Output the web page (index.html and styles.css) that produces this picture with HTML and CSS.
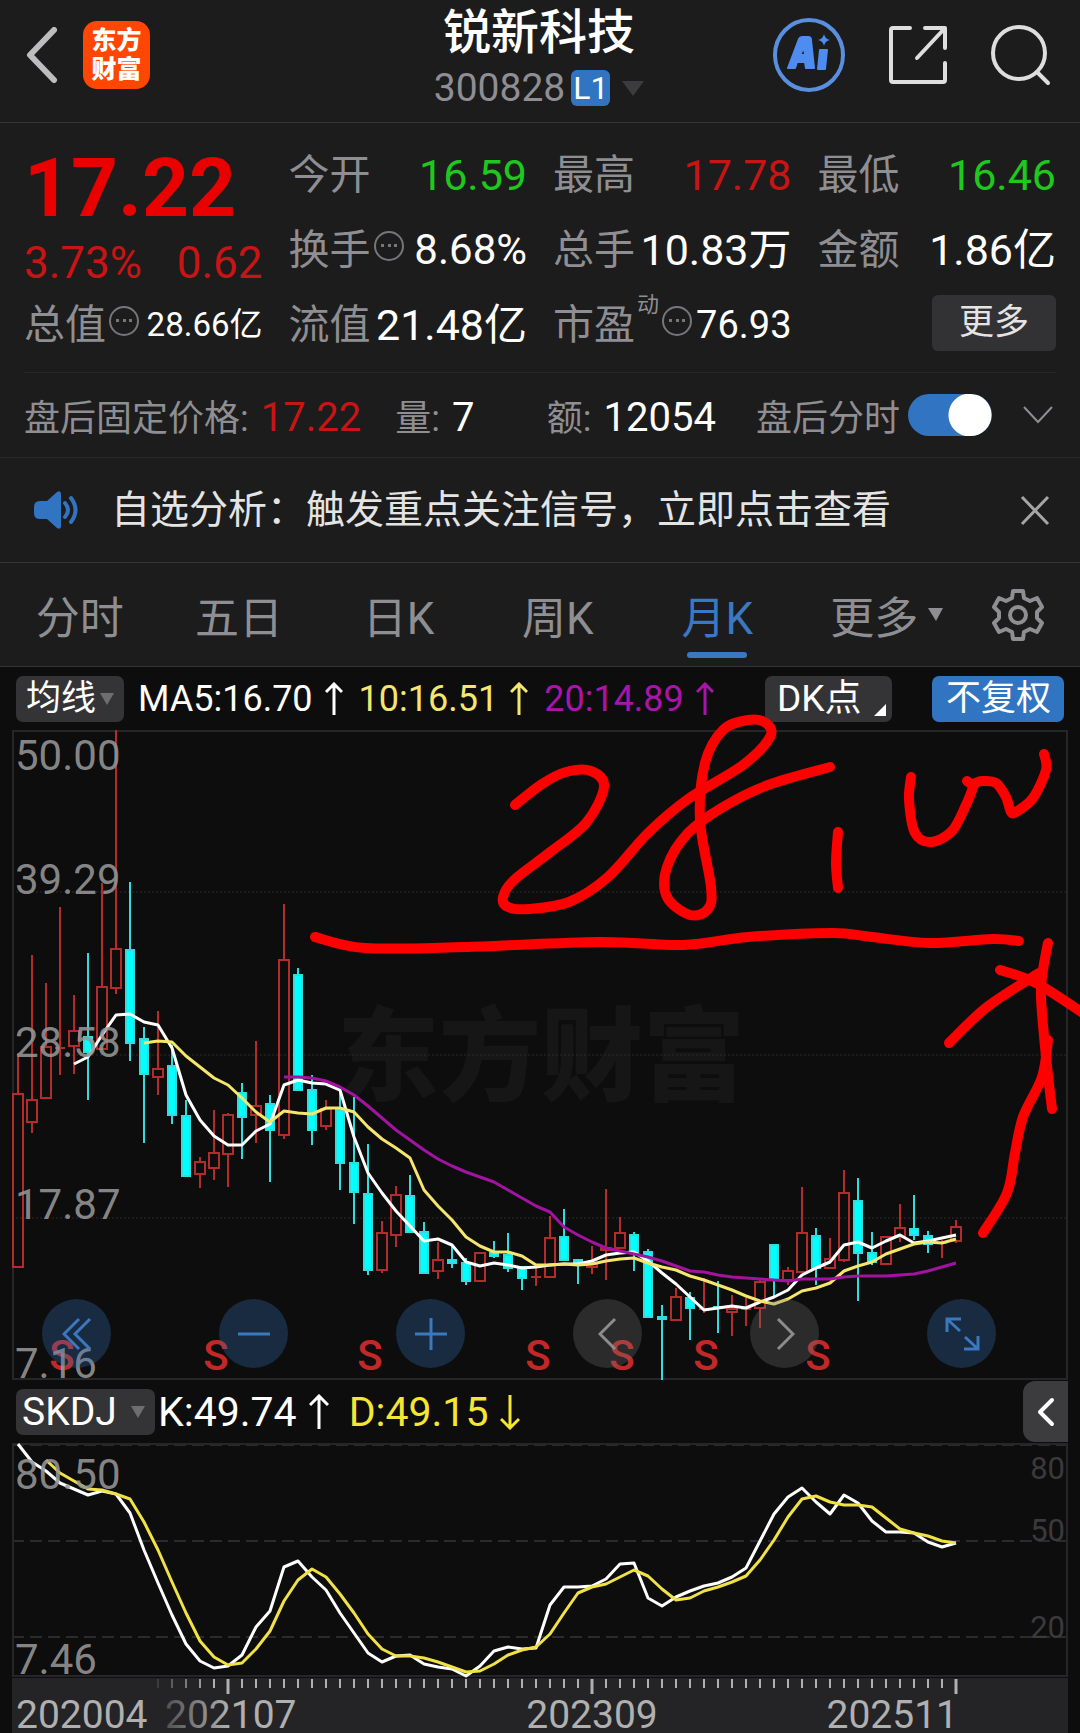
FILE: index.html
```
<!DOCTYPE html>
<html lang="zh-CN">
<head>
    <meta charset="UTF-8">
    <meta name="viewport" content="width=device-width, initial-scale=1.0">
    <title>锐新科技 300828</title>
    <link rel="stylesheet" href="styles.css">
</head>
<body>

    <!-- Header -->
    <header class="topbar">
        <div class="topbar-side">
            <button class="icon-btn back" aria-label="返回">
                <svg width="32" height="56" viewBox="0 0 32 56"><path d="M28 3 4 28l24 25" fill="none" stroke="#bdbdbf" stroke-width="6" stroke-linecap="round" stroke-linejoin="round"/></svg>
            </button>
            <a class="logo" href="#">东方<br>财富</a>
        </div>
        <div class="stock">
            <h1>锐新科技</h1>
            <div class="stock-code">
                <span>300828</span>
                <span class="level">L1</span>
                <svg width="22" height="15" viewBox="0 0 22 15"><path d="M0 0h22L11 15z" fill="#3c3c3e"/></svg>
            </div>
        </div>
        <div class="topbar-side topbar-right">
            <button class="icon-btn" aria-label="AI">
                <svg width="74" height="76" viewBox="0 0 74 76">
                    <ellipse cx="37" cy="38" rx="34" ry="35" fill="none" stroke="#5a8fe0" stroke-width="4"/>
                    <path d="M16 51 27 22q1-2 3-2h6q3 0 3 3l3 28h-8l-1-6h-8l-2 6zM28 38h5l-1-8z" fill="#4e8cf0" stroke="#4e8cf0" stroke-width="2" stroke-linejoin="round" fill-rule="evenodd"/>
                    <path d="M48 33h7l-2 19h-7z" fill="#4e8cf0" stroke="#4e8cf0" stroke-width="2" stroke-linejoin="round"/>
                    <path d="M52 17q1 5 6 6-5 1-6 6-1-5-6-6 5-1 6-6z" fill="#4e8cf0"/>
                </svg>
            </button>
            <button class="icon-btn" aria-label="分享">
                <svg width="60" height="60" viewBox="0 0 60 60" fill="none" stroke="#dededf" stroke-width="4" stroke-linecap="round" stroke-linejoin="round">
                    <path d="M22 3H5q-2 0-2 2v50q0 2 2 2h50q2 0 2-2V38M37 3h20v20M57 3 29 33"/>
                </svg>
            </button>
            <button class="icon-btn" aria-label="搜索">
                <svg width="62" height="62" viewBox="0 0 62 62" fill="none" stroke="#dededf" stroke-width="4" stroke-linecap="round">
                    <circle cx="29" cy="29" r="26"/><path d="m47 48 11 11"/>
                </svg>
            </button>
        </div>
    </header>

    <!-- Quote -->
    <section class="quote">
        <div class="price-box">
            <div class="price">17.22</div>
            <div class="change"><span>3.73%</span><span>0.62</span></div>
        </div>
        <div class="stat"><span class="label">今开</span><span class="value down">16.59</span></div>
        <div class="stat"><span class="label">最高</span><span class="value up">17.78</span></div>
        <div class="stat"><span class="label">最低</span><span class="value down">16.46</span></div>
        <div class="stat">
            <span class="label">换手</span>
            <svg class="dots" width="32" height="32" viewBox="0 0 32 32"><circle cx="16" cy="16" r="14" fill="none" stroke="#77777b" stroke-width="2"/><path d="M8 14h3v3H8zM15 14h3v3h-3zM21 14h3v3h-3z" fill="#77777b"/></svg>
            <span class="value mid">8.68%</span>
        </div>
        <div class="stat"><span class="label">总手</span><span class="value">10.83万</span></div>
        <div class="stat"><span class="label">金额</span><span class="value">1.86亿</span></div>
        <div class="stat">
            <span class="label">总值</span>
            <svg class="dots" width="32" height="32" viewBox="0 0 32 32"><circle cx="16" cy="16" r="14" fill="none" stroke="#77777b" stroke-width="2"/><path d="M8 14h3v3H8zM15 14h3v3h-3zM21 14h3v3h-3z" fill="#77777b"/></svg>
            <span class="value small">28.66亿</span>
        </div>
        <div class="stat"><span class="label">流值</span><span class="value">21.48亿</span></div>
        <div class="stat">
            <span class="label">市盈</span><span class="label dynamic">动</span>
            <svg class="dots" width="32" height="32" viewBox="0 0 32 32"><circle cx="16" cy="16" r="14" fill="none" stroke="#77777b" stroke-width="2"/><path d="M8 14h3v3H8zM15 14h3v3h-3zM21 14h3v3h-3z" fill="#77777b"/></svg>
            <span class="value ratio">76.93</span>
        </div>
        <div class="stat"><button class="more">更多</button></div>
    </section>

    <!-- After-hours -->
    <section class="after">
        <div class="pair"><span class="label">盘后固定价格:</span><span class="value up">17.22</span></div>
        <div class="pair"><span class="label">量:</span><span class="value">7</span></div>
        <div class="pair pair-amount"><span class="label">额:</span><span class="value">12054</span></div>
        <div class="pair pair-switch">
            <label class="label" for="afterSwitch">盘后分时</label>
            <input class="switch" type="checkbox" id="afterSwitch" checked>
        </div>
        <button class="icon-btn" aria-label="展开">
            <svg width="32" height="20" viewBox="0 0 32 20"><path d="m2 2 14 15L30 2" fill="none" stroke="#8e8e93" stroke-width="2"/></svg>
        </button>
    </section>

    <!-- Notice -->
    <section class="notice">
        <svg width="44" height="38" viewBox="0 0 44 38">
            <path d="M6 10h7L23 1q4-2 4 2v32q0 4-4 2L13 28H6q-6 0-6-6v-6q0-6 6-6z" fill="#3174c1"/>
            <path d="M31 12q6 7 0 14M37 7q9 12 0 24" fill="none" stroke="#3174c1" stroke-width="4" stroke-linecap="round"/>
        </svg>
        <p>自选分析：触发重点关注信号，立即点击查看</p>
        <button class="icon-btn" aria-label="关闭">
            <svg width="30" height="32" viewBox="0 0 30 32"><path d="m2 3 26 27M28 3 2 30" fill="none" stroke="#a5a5a7" stroke-width="3"/></svg>
        </button>
    </section>

    <!-- Period tabs -->
    <nav class="tabs">
        <button>分时</button>
        <button>五日</button>
        <button>日K</button>
        <button>周K</button>
        <button class="active">月K</button>
        <button>更多<svg width="15" height="13" viewBox="0 0 15 13"><path d="M0 0h15L8 13z" fill="#8e8e93"/></svg></button>
        <button aria-label="设置">
            <svg width="54" height="54" viewBox="0 0 54 54" fill="none" stroke="#8e8e93" stroke-width="4" stroke-linejoin="round">
                <path d="M22 3h10l1 7 6 3 7-3 5 9-5 5v6l5 5-5 9-7-3-6 3-1 7H22l-1-7-6-3-7 3-5-9 5-5v-6l-5-5 5-9 7 3 6-3z"/>
                <circle cx="27" cy="27" r="8"/>
            </svg>
        </button>
    </nav>

    <main class="charts">
        <!-- Moving averages -->
        <div class="bar">
            <button class="pick">均线<svg width="14" height="12" viewBox="0 0 14 12"><path d="M0 0h14L7 12z" fill="#6e6e70"/></svg></button>
            <span class="ma">MA5:16.70<svg class="arrow" width="18" height="34" viewBox="0 0 18 34"><path d="M9 33V2M1 10l8-8 8 8"/></svg></span>
            <span class="ma ma10">10:16.51<svg class="arrow" width="18" height="34" viewBox="0 0 18 34"><path d="M9 33V2M1 10l8-8 8 8"/></svg></span>
            <span class="ma ma20">20:14.89<svg class="arrow" width="18" height="34" viewBox="0 0 18 34"><path d="M9 33V2M1 10l8-8 8 8"/></svg></span>
            <button class="pick dk">DK点<svg width="12" height="12" viewBox="0 0 12 12"><path d="M12 0v12H0z" fill="#fff"/></svg></button>
            <button class="pick rights">不复权</button>
        </div>

        <!-- Monthly candles -->
        <div class="plot">
            <svg id="kline" class="kline" viewBox="12 730 1056 650">
                <text class="watermark" x="541" y="1093" text-anchor="middle">东方财富</text>
                <path class="grid dotted" d="M12 892H1068M12 1055H1068M12 1218H1068"/>
                <rect class="frame" x="13" y="731" width="1054" height="648"/>
                <g id="candles"></g>
                <g id="averages"></g>
                <g class="sell">
                    <text x="62" y="1370">S</text>
                    <text x="216" y="1370">S</text>
                    <text x="370" y="1370">S</text>
                    <text x="538" y="1370">S</text>
                    <text x="622" y="1370">S</text>
                    <text x="706" y="1370">S</text>
                    <text x="818" y="1370">S</text>
                </g>
                <g class="scale">
                    <text x="15" y="770">50.00</text>
                    <text x="15" y="894">39.29</text>
                    <text x="15" y="1057">28.58</text>
                    <text x="15" y="1219">17.87</text>
                    <text x="15" y="1378">7.16</text>
                </g>
            </svg>
            <div class="tools">
                <button aria-label="最早"><svg width="30" height="34" viewBox="0 0 30 34"><path d="M17 2 2 17l15 15M28 2 13 17l15 15"/></svg></button>
                <button aria-label="缩小"><svg width="34" height="34" viewBox="0 0 34 34"><path d="M1 17h32"/></svg></button>
                <button aria-label="放大"><svg width="34" height="34" viewBox="0 0 34 34"><path d="M1 17h32M17 1v32"/></svg></button>
                <button class="gray" aria-label="左移"><svg width="20" height="34" viewBox="0 0 20 34"><path d="M17 2 2 17l15 15"/></svg></button>
                <button class="gray" aria-label="右移"><svg width="20" height="34" viewBox="0 0 20 34"><path d="m3 2 15 15L3 32"/></svg></button>
                <button aria-label="全屏"><svg width="36" height="36" viewBox="0 0 36 36"><path d="M3 16V3h14M3 3l13 12M34 20v13H20M34 33 21 21"/></svg></button>
            </div>
            <svg id="pen" class="pen" viewBox="12 730 1056 650" aria-hidden="true"></svg>
        </div>

        <!-- SKDJ -->
        <div class="bar skdj-bar">
            <button class="pick">SKDJ<svg width="14" height="12" viewBox="0 0 14 12"><path d="M0 0h14L7 12z" fill="#6e6e70"/></svg></button>
            <span class="ma">K:49.74<svg class="arrow" width="20" height="36" viewBox="0 0 20 36"><path d="M10 35V2M1 11l9-9 9 9"/></svg></span>
            <span class="ma d-line">D:49.15<svg class="arrow" width="20" height="36" viewBox="0 0 20 36"><path d="M10 1v33M1 25l9 9 9-9"/></svg></span>
            <button class="drawer" aria-label="展开侧栏"><svg width="18" height="30" viewBox="0 0 18 30"><path d="M15 3 3 15l12 12" fill="none" stroke="#fff" stroke-width="4" stroke-linecap="round" stroke-linejoin="round"/></svg></button>
        </div>
        <svg class="kline" viewBox="12 1443 1056 290">
            <defs>
                <linearGradient id="fade" gradientUnits="userSpaceOnUse" x1="150" y1="0" x2="230" y2="0">
                    <stop offset="0" stop-color="#3a3a3c"/>
                    <stop offset="1" stop-color="#b0b0b0"/>
                </linearGradient>
            </defs>
            <path class="grid dashed" d="M12 1445H1068M12 1541H1068M12 1637H1068"/>
            <rect class="frame" x="13" y="1444" width="1054" height="232"/>
            <g class="levels">
                <text x="1065" y="1479">80</text>
                <text x="1065" y="1541">50</text>
                <text x="1065" y="1638">20</text>
            </g>
            <g id="skdj"></g>
            <g class="scale">
                <text x="15" y="1489">80.50</text>
                <text x="15" y="1674">7.46</text>
            </g>
            <rect x="12" y="1678" width="1056" height="55" fill="#242426"/>
            <g id="ticks"></g>
            <g class="dates">
                <text x="16" y="1728">202004</text>
                <text x="165" y="1728" fill="url(#fade)">202107</text>
                <text x="592" y="1728" text-anchor="middle">202309</text>
                <text x="958" y="1728" text-anchor="end">202511</text>
            </g>
        </svg>
    </main>

    <script src="script.js"></script>
</body>
</html>
```
FILE: styles.css
```
* {
    box-sizing: border-box;
}

body {
    margin: 0;
    background-color: #1c1c1c;
    color: #fff;
    font-family: Roboto, "Noto Sans CJK SC", sans-serif;
    overflow-x: hidden;
}

button {
    padding: 0;
    border: none;
    background: none;
    color: inherit;
    font: inherit;
    cursor: pointer;
}

svg {
    display: block;
    flex: none;
}

.label {
    color: #8e8e93;
    white-space: nowrap;
}

.value {
    white-space: nowrap;
}

.up {
    color: #c81414;
}

.down {
    color: #1ec81e;
}

/* Header */
.topbar {
    display: grid;
    grid-template-columns: 1fr auto 1fr;
    align-items: center;
    height: 123px;
    padding: 0 28px 0 26px;
    border-bottom: 1px solid #353537;
}

.topbar-side {
    display: flex;
    align-items: center;
    gap: 25px;
    padding-bottom: 12px;
}

.topbar-right {
    justify-content: flex-end;
    gap: 42px;
}

.logo {
    width: 67px;
    height: 68px;
    padding-top: 5px;
    border-radius: 14px;
    background-color: #ff4602;
    color: #fff;
    font-size: 25px;
    font-weight: 900;
    line-height: 29px;
    text-align: center;
    text-decoration: none;
}

.stock {
    text-align: center;
}

h1 {
    margin: 0;
    font-size: 48px;
    font-weight: 500;
    line-height: 56px;
}

.stock-code {
    display: flex;
    align-items: center;
    justify-content: center;
    gap: 6px;
    height: 56px;
    padding-bottom: 2px;
    color: #8e8e93;
    font-size: 39px;
}

.stock-code svg {
    margin-left: 6px;
}

.level {
    width: 39px;
    border-radius: 6px;
    background-color: #3174c1;
    color: #fff;
    font-size: 32px;
    line-height: 36px;
}

/* Quote */
.quote {
    display: grid;
    grid-template-columns: repeat(4, 1fr);
    grid-auto-rows: 75px;
    column-gap: 26px;
    margin: 0 24px;
    padding: 14px 0 10px;
    border-bottom: 1px solid #272729;
}

.price-box {
    grid-row: span 2;
}

.price {
    color: #eb0000;
    font-size: 82px;
    font-weight: 700;
    line-height: 102px;
}

.change {
    display: flex;
    justify-content: space-between;
    color: #c81414;
    font-size: 44px;
    line-height: 48px;
}

.stat {
    display: flex;
    align-items: center;
    min-width: 0;
    font-size: 41px;
    line-height: 60px;
}

.stat .value {
    margin-left: auto;
    font-size: 43px;
}

.stat .value.mid {
    font-size: 42px;
}

.stat .value.ratio {
    font-size: 38px;
}

.stat .value.small {
    font-size: 33px;
}

.stat .dynamic {
    align-self: flex-start;
    margin-left: 2px;
    font-size: 22px;
    line-height: 36px;
}

.dots {
    margin-left: 2px;
    margin-bottom: 8px;
}

.more {
    width: 124px;
    height: 56px;
    margin-left: auto;
    margin-bottom: 4px;
    border-radius: 6px;
    background-color: #323234;
    color: #e4e4e4;
    font-size: 35px;
    line-height: 56px;
}

/* After-hours */
.after {
    display: flex;
    align-items: center;
    height: 85px;
    padding: 0 26px 0 24px;
    border-bottom: 1px solid #29292b;
    font-size: 36px;
}

.pair {
    display: flex;
    align-items: center;
    gap: 12px;
    margin-right: 34px;
}

.pair .value {
    padding-top: 4px;
    font-size: 40px;
}

.pair-amount {
    margin-left: auto;
}

.pair-switch {
    margin-left: 6px;
    margin-right: 30px;
    gap: 8px;
}

.switch {
    appearance: none;
    width: 84px;
    height: 42px;
    margin: 0;
    border-radius: 21px;
    background: radial-gradient(circle at 62px 21px, #fff 21px, transparent 22px) #3174c1;
}

/* Notice */
.notice {
    display: flex;
    align-items: center;
    height: 105px;
    padding: 0 30px 0 34px;
    border-bottom: 1px solid #353537;
}

.notice p {
    flex: 1;
    margin: 0 0 0 33px;
    color: #e4e4e4;
    font-size: 39px;
    line-height: 50px;
}

/* Period tabs */
.tabs {
    display: grid;
    grid-template-columns: repeat(5, 160fr) 180fr 84fr;
    height: 104px;
    padding-right: 20px;
    border-bottom: 1px solid #353537;
}

.tabs button {
    position: relative;
    display: flex;
    align-items: center;
    justify-content: center;
    gap: 10px;
    color: #8e8e93;
    font-size: 44px;
}

.tabs .active {
    color: #3b78c0;
}

.tabs .active::after {
    content: "";
    position: absolute;
    bottom: 8px;
    left: 50%;
    width: 60px;
    height: 6px;
    margin-left: -30px;
    border-radius: 3px;
    background-color: #3b78c0;
}

/* Charts */
.charts {
    padding: 0 12px;
    background-color: #0d0d0d;
}

.bar {
    display: flex;
    align-items: center;
    height: 63px;
    padding: 0 4px;
    font-size: 36px;
}

.pick {
    display: flex;
    align-items: center;
    justify-content: space-between;
    height: 46px;
    padding: 0 10px;
    border-radius: 7px;
    background-color: #343436;
    font-size: 35px;
    line-height: 46px;
    white-space: nowrap;
}

.bar .pick:first-child {
    width: 108px;
    margin-right: 14px;
}

.bar .dk {
    width: 127px;
    margin-left: auto;
    padding: 0 6px 0 12px;
    font-size: 37px;
}

.dk svg {
    align-self: flex-end;
    margin-bottom: 6px;
}

.bar .rights {
    width: 132px;
    margin-left: 40px;
    padding: 0 14px;
    background-color: #3174c1;
}

.ma {
    display: flex;
    align-items: center;
    gap: 12px;
    margin-right: 16px;
}

.ma10 {
    color: #f5e66e;
}

.ma20 {
    color: #aa14aa;
}

.arrow {
    fill: none;
    stroke: currentColor;
    stroke-width: 3;
}

.plot {
    position: relative;
}

.kline {
    width: 100%;
    height: auto;
}

.plot .kline {
    overflow: visible;
}

.frame {
    fill: none;
    stroke: #262628;
    stroke-width: 2;
}

.grid {
    fill: none;
    stroke: #2b2b2d;
    stroke-width: 2;
}

.dotted {
    stroke-dasharray: 2 2;
    stroke-width: 1;
}

.dashed {
    stroke-dasharray: 12 6;
}

.watermark {
    fill: #161616;
    font-size: 102px;
    font-weight: 900;
}

.rise {
    fill: none;
    stroke: #b42b2b;
    stroke-width: 2;
}

.fall {
    fill: #00ffff;
    stroke: #32dcdc;
    stroke-width: 2;
}

.line {
    fill: none;
    stroke-width: 3;
    stroke-linejoin: round;
}

.scale {
    fill: #969696;
    fill-opacity: 0.9;
    font-size: 42px;
}

.sell {
    fill: #c32828;
    font-size: 42px;
    font-weight: 500;
    text-anchor: middle;
}

.levels {
    fill: #3a3a3c;
    font-size: 31px;
    text-anchor: end;
}

.dates {
    fill: #b0b0b0;
    font-size: 39px;
}

/* Round buttons over the candles */
.tools {
    position: absolute;
    left: 0;
    right: 0;
    bottom: 12px;
    display: flex;
    justify-content: space-between;
    padding: 0 72px 0 30px;
}

.tools button {
    display: flex;
    align-items: center;
    justify-content: center;
    width: 69px;
    height: 69px;
    border-radius: 50%;
    background-color: rgba(50, 113, 183, 0.3);
}

.tools .gray {
    background-color: rgba(113, 113, 113, 0.3);
}

.tools svg {
    fill: none;
    stroke: #3b78c0;
    stroke-width: 3;
}

.tools .gray svg {
    stroke: #8c8c8e;
}

.pen {
    position: absolute;
    inset: 0;
    width: 100%;
    height: 100%;
    overflow: visible;
    fill: none;
    stroke: #ff0000;
    stroke-width: 10;
    stroke-linecap: round;
    stroke-linejoin: round;
    pointer-events: none;
}

.skdj-bar {
    padding-right: 0;
    font-size: 41px;
}

.skdj-bar .pick:first-child {
    width: 139px;
    margin-right: 3px;
    padding: 0 10px 0 6px;
    font-size: 39px;
}

.skdj-bar .ma {
    margin-right: 20px;
}

.d-line {
    color: #f5e632;
}

.drawer {
    display: flex;
    align-items: center;
    justify-content: center;
    width: 45px;
    height: 61px;
    margin-left: auto;
    border-radius: 12px 0 0 12px;
    background-color: #3c3c3e;
}
```
FILE: script.js
```
const NS = 'http://www.w3.org/2000/svg';
const STEP = 14;
const START = 18;

// [high, body top, body bottom, low, 1 = rise / 0 = fall], one per month
const candles = [
    [1053, 1094, 1267, 1267, 1], [955, 1100, 1122, 1133, 1], [983, 1047, 1098, 1098, 1], [907, 1048, 1048, 1075, 1],
    [995, 1031, 1046, 1074, 1], [953, 1037, 1052, 1100, 0], [883, 987, 1049, 1049, 1], [730, 949, 988, 994, 1],
    [882, 950, 1043, 1061, 0], [1027, 1039, 1074, 1143, 0], [1011, 1069, 1077, 1095, 1], [1045, 1066, 1115, 1124, 0],
    [1100, 1116, 1176, 1176, 0], [1157, 1162, 1174, 1188, 1], [1110, 1153, 1168, 1180, 1], [1113, 1115, 1154, 1187, 1],
    [1083, 1093, 1117, 1159, 0], [1041, 1106, 1115, 1143, 1], [1095, 1104, 1130, 1182, 0], [904, 960, 1135, 1139, 1],
    [968, 975, 1090, 1090, 0], [1075, 1090, 1130, 1145, 0], [1100, 1109, 1126, 1130, 1], [1092, 1110, 1163, 1190, 0],
    [1097, 1163, 1192, 1224, 0], [1144, 1194, 1270, 1275, 0], [1221, 1233, 1270, 1273, 1], [1186, 1195, 1235, 1247, 1],
    [1175, 1196, 1232, 1232, 0], [1222, 1232, 1273, 1273, 0], [1242, 1260, 1271, 1279, 1], [1244, 1260, 1263, 1268, 0],
    [1258, 1263, 1281, 1285, 0], [1253, 1253, 1281, 1281, 1], [1241, 1253, 1256, 1258, 0], [1233, 1255, 1268, 1272, 0],
    [1267, 1267, 1278, 1290, 0], [1265, 1277, 1277, 1286, 1], [1216, 1238, 1277, 1278, 1], [1209, 1237, 1260, 1260, 0],
    [1259, 1260, 1263, 1284, 0], [1246, 1264, 1267, 1274, 1], [1189, 1248, 1250, 1280, 1], [1217, 1233, 1248, 1248, 1],
    [1232, 1235, 1252, 1271, 0], [1249, 1252, 1317, 1317, 0], [1305, 1317, 1319, 1380, 0], [1288, 1297, 1320, 1320, 1],
    [1292, 1298, 1308, 1340, 0], [1278, 1309, 1309, 1313, 1], [1281, 1307, 1308, 1333, 0], [1295, 1309, 1312, 1336, 1],
    [1298, 1309, 1309, 1326, 1], [1280, 1282, 1308, 1328, 1], [1244, 1245, 1280, 1297, 0], [1267, 1271, 1280, 1285, 1],
    [1187, 1233, 1272, 1272, 1], [1228, 1236, 1268, 1285, 0], [1238, 1259, 1268, 1268, 1], [1170, 1193, 1260, 1262, 1],
    [1178, 1201, 1253, 1301, 0], [1232, 1253, 1262, 1265, 0], [1236, 1237, 1264, 1264, 1], [1204, 1228, 1237, 1242, 1],
    [1195, 1229, 1235, 1240, 0], [1231, 1236, 1244, 1253, 0], [1240, 1243, 1243, 1258, 1], [1220, 1227, 1241, 1243, 1]
];

const ma5 = [1064, 1057, 1035, 1015, 1014, 1022, 1025, 1048, 1095, 1120, 1136, 1145, 1145, 1131, 1124, 1085, 1080, 1083, 1084, 1090, 1137, 1173, 1193, 1211, 1226, 1241, 1239, 1245, 1262, 1266, 1263, 1265, 1268, 1267, 1265, 1264, 1264, 1261, 1255, 1253, 1252, 1261, 1273, 1284, 1297, 1310, 1308, 1306, 1308, 1302, 1297, 1290, 1275, 1268, 1262, 1245, 1242, 1248, 1241, 1235, 1243, 1241, 1238, 1235];
const ma10 = [1043, 1041, 1042, 1056, 1067, 1078, 1085, 1098, 1112, 1122, 1111, 1113, 1114, 1108, 1108, 1112, 1127, 1139, 1148, 1158, 1190, 1206, 1220, 1237, 1246, 1252, 1252, 1256, 1265, 1265, 1264, 1265, 1264, 1261, 1259, 1258, 1263, 1267, 1270, 1276, 1280, 1285, 1290, 1296, 1301, 1304, 1299, 1291, 1288, 1283, 1271, 1266, 1262, 1254, 1249, 1244, 1242, 1243, 1239];
const ma20 = [1077, 1077, 1078, 1081, 1087, 1095, 1106, 1118, 1130, 1140, 1150, 1159, 1166, 1172, 1177, 1182, 1190, 1198, 1206, 1212, 1227, 1235, 1242, 1248, 1251, 1254, 1257, 1261, 1266, 1271, 1272, 1275, 1277, 1278, 1279, 1280, 1281, 1279, 1279, 1279, 1277, 1276, 1276, 1276, 1275, 1274, 1271, 1267, 1263];

const kLine = [1444, 1462, 1471, 1483, 1489, 1495, 1491, 1494, 1513, 1550, 1583, 1615, 1644, 1661, 1668, 1666, 1655, 1627, 1611, 1567, 1561, 1577, 1590, 1613, 1633, 1653, 1662, 1656, 1655, 1664, 1667, 1669, 1676, 1666, 1651, 1647, 1649, 1648, 1605, 1587, 1587, 1586, 1579, 1564, 1563, 1598, 1606, 1597, 1591, 1586, 1583, 1577, 1568, 1541, 1514, 1497, 1488, 1502, 1514, 1495, 1503, 1521, 1532, 1532, 1533, 1542, 1547, 1543];
const dLine = [1460, 1473, 1481, 1489, 1490, 1494, 1499, 1522, 1550, 1582, 1613, 1641, 1657, 1665, 1663, 1649, 1631, 1601, 1580, 1569, 1577, 1594, 1613, 1634, 1649, 1656, 1656, 1658, 1662, 1667, 1672, 1671, 1664, 1655, 1650, 1647, 1634, 1613, 1593, 1587, 1584, 1577, 1570, 1576, 1589, 1600, 1598, 1591, 1587, 1582, 1576, 1560, 1540, 1517, 1499, 1496, 1502, 1505, 1505, 1507, 1518, 1529, 1533, 1536, 1541, 1543];

// Freehand strokes
const strokes = [
    [[515, 805], [542, 784], [566, 772], [591, 771], [604, 787], [586, 823], [549, 853], [514, 880], [503, 897], [508, 907], [529, 909], [569, 902], [608, 877], [648, 833], [688, 799], [743, 765], [770, 737], [766, 723], [748, 720], [723, 730], [705, 763], [700, 820], [711, 887], [708, 909], [690, 915], [667, 897], [667, 867], [688, 833], [723, 807], [768, 785], [830, 767]],
    [[838, 832], [836, 863], [838, 888]],
    [[911, 777], [909, 800], [915, 833], [931, 842], [952, 831], [966, 805], [974, 785]],
    [[967, 781], [972, 784], [982, 781], [996, 783], [1006, 797], [1011, 812], [1016, 812], [1033, 798], [1046, 770], [1044, 754]],
    [[315, 937], [365, 948], [464, 947], [599, 942], [683, 945], [748, 937], [832, 933], [872, 937], [929, 943], [992, 939], [1019, 941]],
    [[1048, 943], [1043, 970], [1041, 997], [1046, 1057], [1052, 1109]],
    [[949, 1043], [987, 1007], [1039, 973]],
    [[1000, 970], [1036, 983], [1086, 1015]],
    [[983, 1233], [1007, 1193], [1015, 1153], [1023, 1117], [1042, 1077], [1048, 1040]]
];

function addPath(parent, d, className, stroke) {
    const path = document.createElementNS(NS, 'path');
    path.setAttribute('d', d);
    if (className) path.setAttribute('class', className);
    if (stroke) path.setAttribute('stroke', stroke);
    parent.appendChild(path);
}

function drawLine(parent, values, first, color) {
    const points = values.map((y, i) => `${START + (first + i) * STEP} ${y}`);
    addPath(parent, 'M' + points.join('L'), 'line', color);
}

// Catmull-Rom curve through the points
function smooth(points) {
    let d = `M${points[0]}`;
    for (let i = 0; i < points.length - 1; i++) {
        const p0 = points[i - 1] || points[i];
        const p1 = points[i];
        const p2 = points[i + 1];
        const p3 = points[i + 2] || p2;
        d += `C${p1[0] + (p2[0] - p0[0]) / 6} ${p1[1] + (p2[1] - p0[1]) / 6}`;
        d += ` ${p2[0] - (p3[0] - p1[0]) / 6} ${p2[1] - (p3[1] - p1[1]) / 6} ${p2}`;
    }
    return d;
}

const candleGroup = document.getElementById('candles');
candles.forEach(([high, top, bottom, low, rise], i) => {
    const x = START + i * STEP;
    const half = rise ? 5 : 4;
    const d = `M${x} ${high}V${top}M${x} ${bottom}V${low}M${x - half} ${top}H${x + half}V${bottom}H${x - half}Z`;
    addPath(candleGroup, d, rise ? 'rise' : 'fall');
});

const averages = document.getElementById('averages');
drawLine(averages, ma5, 4, '#ffffff');
drawLine(averages, ma10, 9, '#f5e66e');
drawLine(averages, ma20, 19, '#a014a0');

const skdj = document.getElementById('skdj');
drawLine(skdj, kLine, 0, '#ffffff');
drawLine(skdj, dLine, 2, '#f0e146');

const ticks = document.getElementById('ticks');
for (let i = 10; i < candles.length; i++) {
    const x = START + i * STEP;
    const major = (candles.length - 1 - i) % 26 === 0;
    const color = i < 14 ? ['#3c3c3e', '#5c5c5e', '#7a7a7c', '#98989a'][i - 10] : '#b0b0b0';
    addPath(ticks, `M${x} 1679V${major ? 1694 : 1688}`, major ? 'line' : '', color);
    if (!major) ticks.lastChild.setAttribute('stroke-width', 2);
}

const pen = document.getElementById('pen');
strokes.forEach(points => addPath(pen, smooth(points)));
```
